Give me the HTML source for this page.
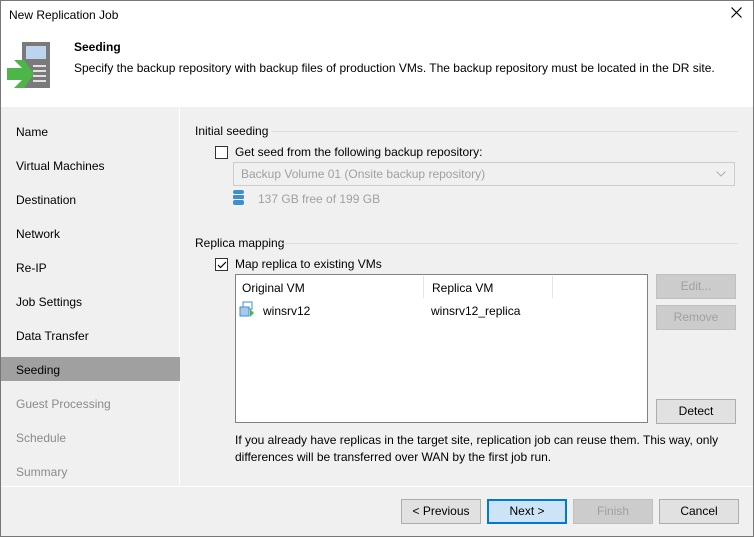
<!DOCTYPE html>
<html><head><meta charset="utf-8"><style>
*{margin:0;padding:0;box-sizing:border-box}
body{width:754px;height:537px;overflow:hidden;background:#f0f0f0;font-family:"Liberation Sans",sans-serif;font-size:12px;color:#000;position:relative}
.win{position:absolute;left:0;top:0;width:754px;height:537px;border:1px solid #777}
.abs{position:absolute;white-space:nowrap}
.hdr{position:absolute;left:1px;top:1px;width:752px;height:106px;background:#fff}
.nav{position:absolute;left:1px;top:107px;width:179px;height:379px;background:#f0f0f0;border-right:1px solid #fff}
.sel{position:absolute;left:1px;top:357px;width:179px;height:24px;background:#a0a0a0}
.btn{position:absolute;height:25px;border:1px solid #adadad;background:#e1e1e1;text-align:center;line-height:23px;font-size:12px}
.dis{color:#a0a0a0;background:#cccccc;border-color:#bfbfbf}
.cb{position:absolute;width:13px;height:13px;border:1px solid #333;background:#fff}
.line{position:absolute;height:1px;background:#dcdcdc}
</style></head><body>
<div class="win"></div>
<div class="hdr"></div>
<div class="abs" style="left:9px;top:8px;font-size:12px">New Replication Job</div>
<svg class="abs" style="left:731px;top:7px" width="11" height="11"><path d="M0.5 0.5L10.5 10.5M10.5 0.5L0.5 10.5" stroke="#000" stroke-width="1.2"/></svg>
<svg class="abs" style="left:0;top:0" width="60" height="100">
<rect x="22" y="42" width="28" height="46" fill="#7a7a7a"/>
<rect x="26" y="46" width="20" height="13" fill="#bcd5ee"/>
<rect x="33" y="65" width="13" height="2" fill="#e0e0e0"/><rect x="33" y="70" width="13" height="2" fill="#e0e0e0"/><rect x="33" y="75" width="13" height="2" fill="#e0e0e0"/><rect x="33" y="80" width="13" height="2" fill="#e0e0e0"/>
<path d="M7 68H22L14 60H24L34 74L24 88H14L22 80H7Z" fill="#4cb748"/>
</svg>
<div class="abs" style="left:74px;top:40px;font-weight:bold">Seeding</div>
<div class="abs" style="left:74px;top:61px">Specify the backup repository with backup files of production VMs. The backup repository must be located in the DR site.</div>
<div class="nav"></div>
<div class="sel"></div>
<div class="abs" style="left:16px;top:125px">Name</div>
<div class="abs" style="left:16px;top:159px">Virtual Machines</div>
<div class="abs" style="left:16px;top:193px">Destination</div>
<div class="abs" style="left:16px;top:227px">Network</div>
<div class="abs" style="left:16px;top:261px">Re-IP</div>
<div class="abs" style="left:16px;top:295px">Job Settings</div>
<div class="abs" style="left:16px;top:329px">Data Transfer</div>
<div class="abs" style="left:16px;top:363px">Seeding</div>
<div class="abs" style="left:16px;top:397px;color:#8a8a8a">Guest Processing</div>
<div class="abs" style="left:16px;top:431px;color:#8a8a8a">Schedule</div>
<div class="abs" style="left:16px;top:465px;color:#8a8a8a">Summary</div>
<div class="abs" style="left:1px;top:486px;width:752px;height:1px;background:#fff"></div>

<div class="abs" style="left:195px;top:124px">Initial seeding</div>
<div class="line" style="left:272px;top:131px;width:466px"></div>
<div class="cb" style="left:215px;top:146px"></div>
<div class="abs" style="left:235px;top:145px">Get seed from the following backup repository:</div>
<div class="abs" style="left:233px;top:162px;width:502px;height:24px;border:1px solid #ccc;background:#f0f0f0"></div>
<div class="abs" style="left:241px;top:167px;color:#a0a0a0">Backup Volume 01 (Onsite backup repository)</div>
<svg class="abs" style="left:716px;top:171px" width="10" height="6"><path d="M0.5 0.5L5 5L9.5 0.5" fill="none" stroke="#b0b0b0"/></svg>
<svg class="abs" style="left:233px;top:189px" width="11" height="17"><rect x="0" y="1" width="11" height="4" rx="2" fill="#3e8fd0"/><rect x="0" y="6" width="11" height="4" rx="1" fill="#3e8fd0"/><rect x="0" y="11" width="11" height="5" rx="2" fill="#3e8fd0"/></svg>
<div class="abs" style="left:258px;top:192px;color:#a0a0a0">137 GB free of 199 GB</div>

<div class="abs" style="left:195px;top:236px">Replica mapping</div>
<div class="line" style="left:280px;top:243px;width:458px"></div>
<div class="cb" style="left:215px;top:258px"></div>
<svg class="abs" style="left:217px;top:261px" width="10" height="8"><path d="M1 4L3.5 6.5L9 1" fill="none" stroke="#000" stroke-width="1.2"/></svg>
<div class="abs" style="left:235px;top:257px">Map replica to existing VMs</div>
<div class="abs" style="left:235px;top:274px;width:413px;height:149px;border:1px solid #828282;background:#fff"></div>
<div class="abs" style="left:423px;top:276px;width:1px;height:22px;background:#e5e5e5"></div>
<div class="abs" style="left:552px;top:276px;width:1px;height:22px;background:#e5e5e5"></div>
<div class="abs" style="left:242px;top:281px">Original VM</div>
<div class="abs" style="left:432px;top:281px">Replica VM</div>
<svg class="abs" style="left:239px;top:301px" width="16" height="16"><rect x="4" y="1" width="9" height="7" fill="none" stroke="#3e8fd0"/><rect x="1" y="6" width="9" height="9" fill="#a9c8ea" stroke="#3e8fd0"/><path d="M11 8l4 4-4 4z" fill="#4cb748"/></svg>
<div class="abs" style="left:263px;top:304px">winsrv12</div>
<div class="abs" style="left:431px;top:304px">winsrv12_replica</div>
<div class="btn dis" style="left:656px;top:274px;width:80px">Edit...</div>
<div class="btn dis" style="left:656px;top:305px;width:80px">Remove</div>
<div class="btn" style="left:656px;top:399px;width:80px">Detect</div>
<div class="abs" style="left:235px;top:432px;line-height:17px">If you already have replicas in the target site, replication job can reuse them. This way, only<br>differences will be transferred over WAN by the first job run.</div>

<div class="btn" style="left:401px;top:499px;width:80px">&lt; Previous</div>
<div class="btn" style="left:487px;top:499px;width:80px;background:#cce4f7;border:2px solid #0078d7;line-height:21px">Next &gt;</div>
<div class="btn dis" style="left:573px;top:499px;width:80px">Finish</div>
<div class="btn" style="left:659px;top:499px;width:80px">Cancel</div>
</body></html>
